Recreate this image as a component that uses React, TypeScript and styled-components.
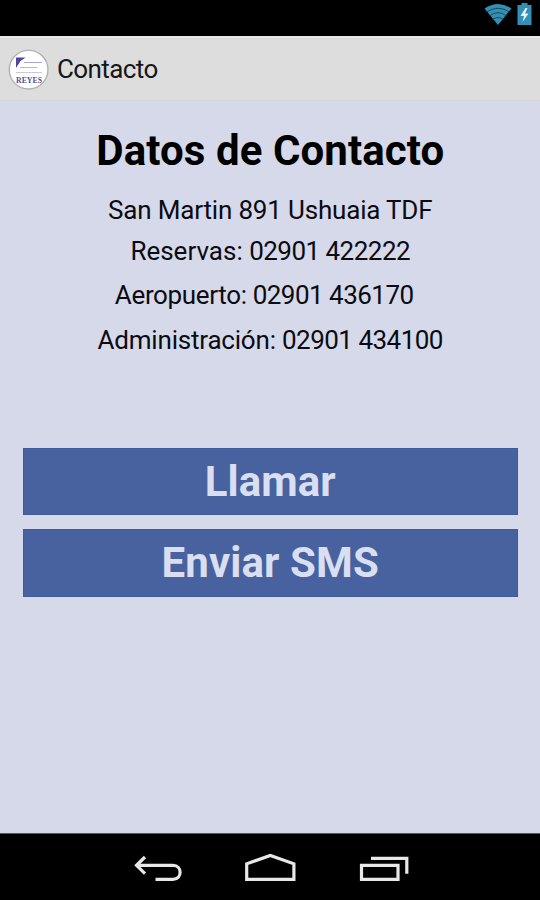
import React from 'react';
import styled, { createGlobalStyle } from 'styled-components';

const GlobalStyle = createGlobalStyle`
  * { box-sizing: border-box; }
  body { margin: 0; background: #d6d9e9; font-family: Roboto, sans-serif; }
`;

const Screen = styled.div`
  width: 540px;
  height: 900px;
  display: flex;
  flex-direction: column;
  overflow: hidden;
  background: #d6d9e9;
`;

const StatusBar = styled.div`
  height: 36px;
  flex: none;
  background: #000;
  display: flex;
  justify-content: flex-end;
  align-items: flex-start;
`;

const ActionBar = styled.header`
  height: 65px;
  flex: none;
  display: flex;
  align-items: center;
  gap: 7px;
  padding-left: 8px;
  background: #dddddd;
  border-top: 2px solid #e8e8e8;
  border-bottom: 1px solid #d3d3d8;
`;

const BarTitle = styled.span`
  font-size: 26px;
  line-height: 30px;
  letter-spacing: -0.6px;
  color: #161616;
  white-space: nowrap;
`;

const Content = styled.main`
  flex: 1;
  display: flex;
  flex-direction: column;
  align-items: center;
  padding: 20px 22.5px 0 23px;
`;

const Heading = styled.h1`
  margin: 0;
  font-size: 42px;
  font-weight: 700;
  line-height: 60px;
  letter-spacing: 0.08px;
  color: #000;
  white-space: nowrap;
`;

const Details = styled.div`
  margin-top: 9px;
  height: 171px;
  display: flex;
  flex-direction: column;
  align-items: center;
`;

const Line = styled.div<{ $height: number; $spacing: number; $trailing?: number }>`
  font-size: 26px;
  line-height: ${(p) => p.$height}px;
  letter-spacing: ${(p) => p.$spacing}px;
  padding-right: ${(p) => p.$trailing ?? 0}px;
  color: #0b0b12;
  white-space: nowrap;
`;

const PhoneNumber = styled.span`
  letter-spacing: -0.52px;
`;

const Actions = styled.div`
  width: 100%;
  margin-top: 87px;
  display: flex;
  flex-direction: column;
  gap: 14px;
`;

const ActionButton = styled.button`
  height: 67.4px;
  border: 1px solid #3f5b9b;
  padding: 0;
  background: #48629f;
  color: #d9def0;
  font: 700 42px/64px Roboto, sans-serif;
  letter-spacing: 0.1px;
`;

const NavBar = styled.nav`
  height: 67px;
  flex: none;
  background: #000;
  border-top: 1px solid #55565e;
`;

const Logo = () => (
  <svg width="42" height="44" viewBox="0 0 42 44">
    <circle cx="20.6" cy="22.7" r="19.3" fill="#fff" stroke="#b0b0b0" strokeWidth="1.3" />
    <path d="M8 10.500h9.500l-5 3.500-4.500 7z" fill="#5145a0" />
    <g fill="none" strokeWidth="1">
      <path d="M16 15.500h18" stroke="#a5a5cf" />
      <path d="M12 20.500h17" stroke="#b5b5d0" />
      <path d="M8 25.500h26" stroke="#c8c8e0" />
    </g>
    <text x="8" y="36.300" textLength="26" lengthAdjust="spacingAndGlyphs" fontFamily="Liberation Serif, serif" fontWeight="700" fontSize="8.5" fill="#5b5090">REYES</text>
  </svg>
);

const StatusIcons = () => (
  <svg width="60" height="32" viewBox="480 0 60 32">
    <path d="M484.500 8.500Q498-.5 511.500 8.500L498 25Z" fill="#338fb3" />
    <g fill="none" stroke="#174252" strokeWidth="0.900">
      <path d="M486.500 12Q498 4.500 509.500 12" />
      <path d="M489.500 15.800Q498 9.500 506.500 15.800" />
      <path d="M492.500 19.500Q498 15.500 503.500 19.500" />
    </g>
    <path d="M517.500 5h4V3h6v2h4v20h-14z" fill="#338fb3" />
    <path d="M525.500 8l-5 8h3.500l-1.500 6 6-8.500h-3.500l2.500-5.500z" fill="#e5f4f8" />
  </svg>
);

const NavIcons = () => (
  <svg width="540" height="66" viewBox="0 834 540 66" fill="none" stroke="#e8e8e8" strokeWidth="3.200">
    <path d="M145 857l-8.500 8.300 8.500 8.300M137 865.300h36c9.500 0 9.500 14 0 14h-17.500" />
    <path d="M246.700 879.300v-15.500l23.600-8.300 23.600 8.300v15.500z" />
    <path d="M361.500 865.300h36.500v14h-36.500z" />
    <path d="M371 858.300h35.800v15.500" />
  </svg>
);

export default function App() {
  return (
    <>
      <GlobalStyle />
      <Screen>
        <StatusBar><StatusIcons /></StatusBar>
        <ActionBar>
          <Logo />
          <BarTitle>Contacto</BarTitle>
        </ActionBar>
        <Content>
          <Heading>Datos de Contacto</Heading>
          <Details>
            <Line $height={41} $spacing={-0.18}>San Martin 891 Ushuaia TDF</Line>
            <Line $height={41} $spacing={0}>Reservas: <PhoneNumber>02901 422222</PhoneNumber></Line>
            <Line $height={47} $spacing={-0.36} $trailing={12}>Aeropuerto: <PhoneNumber>02901 436170</PhoneNumber></Line>
            <Line $height={43} $spacing={-0.2}>Administración: <PhoneNumber>02901 434100</PhoneNumber></Line>
          </Details>
          <Actions>
            <ActionButton>Llamar</ActionButton>
            <ActionButton>Enviar SMS</ActionButton>
          </Actions>
        </Content>
        <NavBar><NavIcons /></NavBar>
      </Screen>
    </>
  );
}
